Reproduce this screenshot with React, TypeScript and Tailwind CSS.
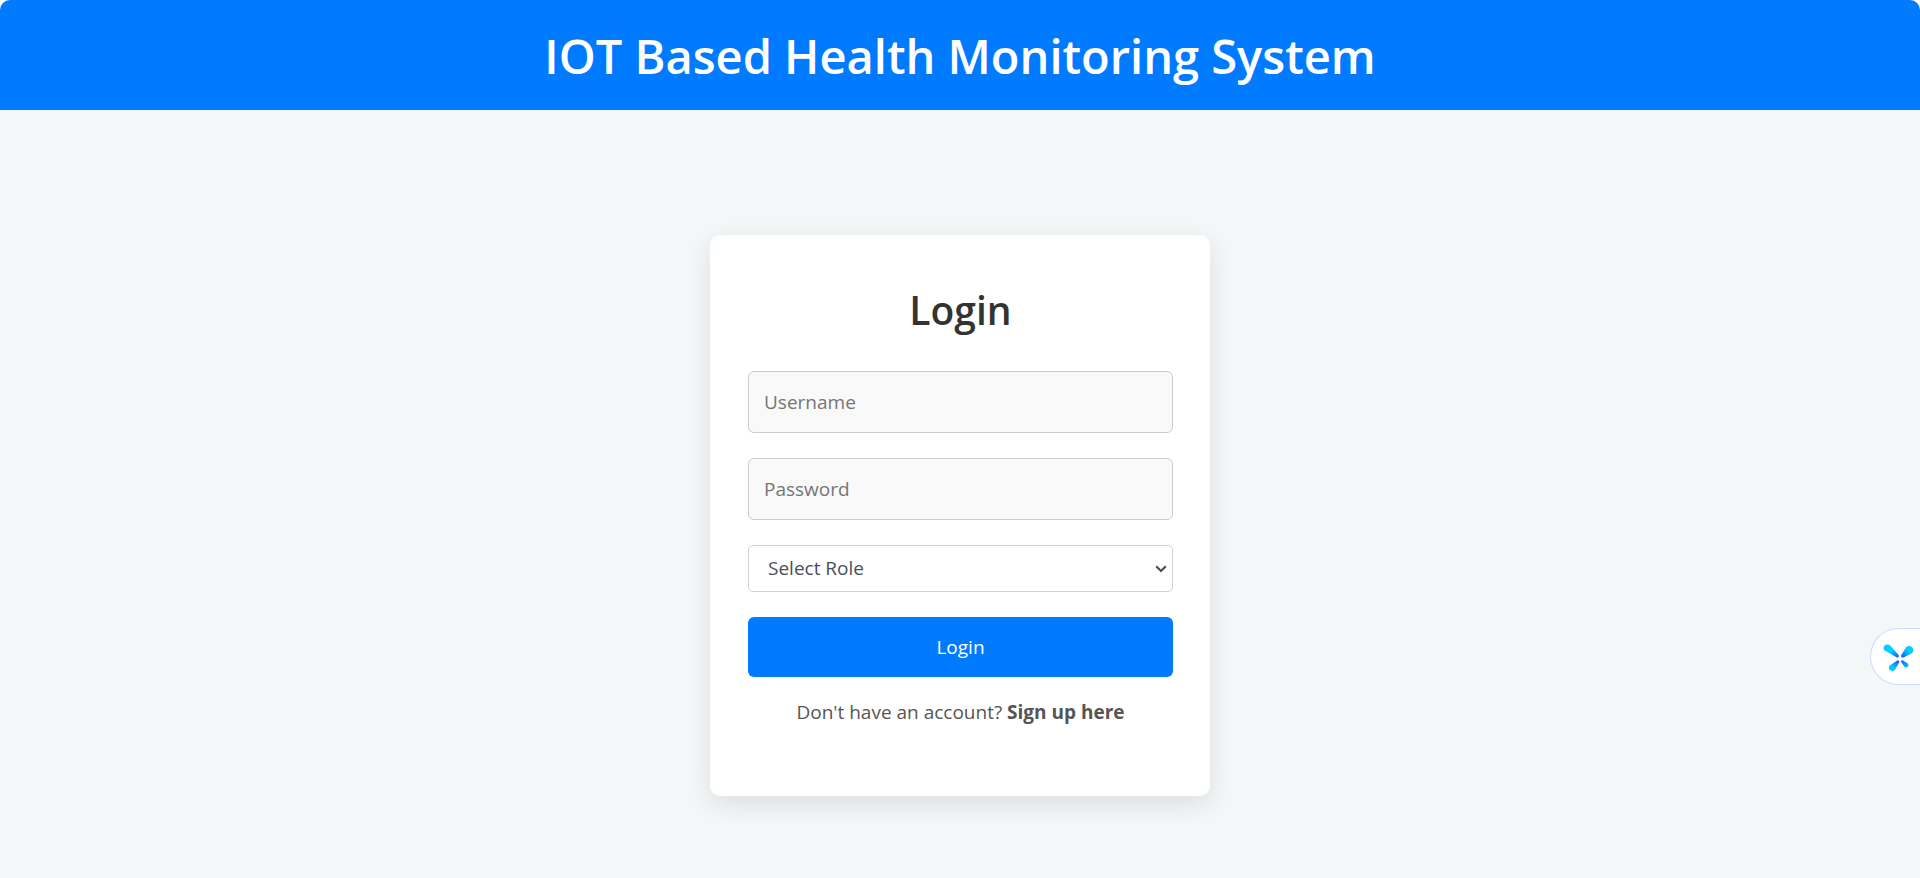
import React, { useState } from "react";

const fieldClass =
  "h-[62px] w-full rounded-md border border-[#cccccc] bg-[#f9f9f9] px-[15px] text-[19px] text-[#333333] placeholder:text-[#757575]";

function AssistantIcon() {
  return (
    <svg viewBox="0 0 32 30" className="h-[30px] w-8" aria-hidden="true">
      <defs>
        <radialGradient id="petal" gradientUnits="userSpaceOnUse" cx="17" cy="17" r="15">
          <stop offset="0.1" stopColor="#1a4dff" />
          <stop offset="0.4" stopColor="#0a86ff" />
          <stop offset="0.75" stopColor="#00ccff" />
        </radialGradient>
      </defs>
      <g fill="url(#petal)">
        <path d="M1.600 8.600C-1.800 4.800 3.300 .4 7.200 3.400L15.600 13C16.600 14.500 15 16 13.500 15.300Z" />
        <path d="M23 5.200C27.400 1.400 33.200 7.400 28.900 11.200L20.600 15.400C18.900 16 17.600 14.600 18.300 13Z" />
        <path d="M14.200 18.600C15.700 17.900 16.900 19.200 16.100 20.600L12 27.700C9 31.200 3.700 27.300 6.700 23.400Z" />
        <path d="M18.200 20C17.600 18.700 18.600 17.800 19.900 18.400L24.600 21.300C27 23.600 24.100 26.900 21.600 24.900Z" />
      </g>
    </svg>
  );
}

export default function App() {
  const [role, setRole] = useState("");

  return (
    <div className="relative flex min-h-screen flex-col overflow-hidden rounded-t-[10px] bg-[#f3f7f8] font-['Open_Sans','Noto_Sans',sans-serif]">
      <header className="flex h-[110px] items-center justify-center bg-[#007bff] px-6">
        <h1 className="pt-[2px] text-center text-[47px] leading-[56px] font-semibold text-white">
          IOT Based Health Monitoring System
        </h1>
      </header>

      <main className="flex flex-1 flex-col items-center px-4 pt-[125px] pb-20">
        <section className="w-full max-w-[500px] rounded-[10px] bg-white pt-[50px] pr-[37px] pb-[69px] pl-[38px] shadow-[0_8px_25px_rgba(0,0,0,0.1)]">
          <h2 className="mb-[36px] text-center text-[39px] leading-[50px] font-semibold text-[#333333]">Login</h2>
          <form className="flex flex-col gap-[25px]" onSubmit={(e) => e.preventDefault()}>
            <input className={fieldClass} type="text" placeholder="Username" aria-label="Username" />
            <input className={fieldClass} type="password" placeholder="Password" aria-label="Password" />
            <div className="relative">
              <select
                className="block h-[47px] w-full appearance-none rounded-[5px] border border-[#ced4da] bg-white pr-10 pl-[19px] text-[19px] text-[#495057]"
                aria-label="Select Role"
                value={role}
                onChange={(e) => setRole(e.target.value)}
              >
                <option value="">Select Role</option>
              </select>
              <svg
                viewBox="0 0 12 8"
                className="pointer-events-none absolute inset-y-0 right-[6px] my-auto h-2 w-3"
                fill="none"
                stroke="#495057"
                strokeWidth="2.2"
                aria-hidden="true"
              >
                <path d="M1.200 1.200L6 6L10.800 1.200" />
              </svg>
            </div>
            <button type="submit" className="h-[60px] w-full rounded-md bg-[#007bff] text-[19px] text-white">
              Login
            </button>
          </form>
          <p className="mt-[20px] text-center text-[19px] leading-[30px] text-[#555555]">
            Don't have an account?{" "}
            <a href="#signup" className="font-bold">
              Sign up here
            </a>
          </p>
        </section>
      </main>

      <button
        type="button"
        aria-label="Open assistant"
        className="absolute top-[628px] right-0 flex h-[57px] w-[50px] items-center rounded-l-full border border-r-0 border-[#c9dcff] bg-white pl-3"
      >
        <AssistantIcon />
      </button>
    </div>
  );
}
